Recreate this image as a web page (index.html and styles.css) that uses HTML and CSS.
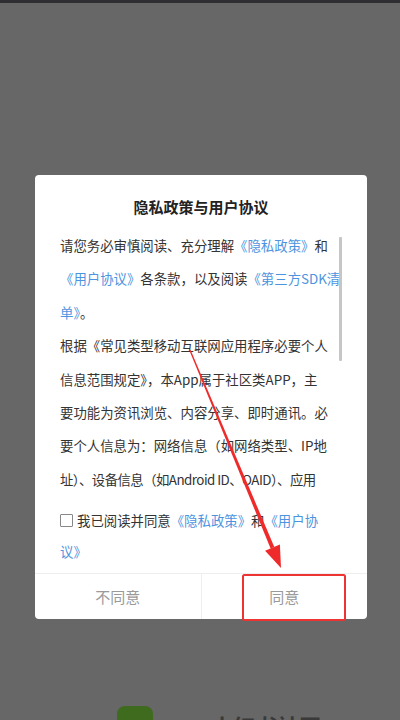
FILE: index.html
```html
<!DOCTYPE html>
<html lang="zh">
<head>
<meta charset="utf-8">
<link rel="stylesheet" href="styles.css">
</head>
<body>
<div class="screen">
  <div class="statusbar"></div>
  <div class="dialog">
    <h1 class="title">隐私政策与用户协议</h1>
    <div class="scroll">
      <div class="content">
        <p>请您务必审慎阅读、充分理解<a class="link">《隐私政策》</a>和<br><a class="link">《用户协议》</a>各条款，以及阅读<a class="link">《第三方SDK清<br>单》</a>。</p>
        <p>根据《常见类型移动互联网应用程序必要个人<br>信息范围规定》，本App属于社区类APP，主<br>要功能为资讯浏览、内容分享、即时通讯。必<br>要个人信息为：网络信息（如网络类型、IP地<br><span class="tight">址）、设备信息（如Android ID、OAID）、应用</span><br>列表信息等。</p>
      </div>
      <div class="scrollbar"></div>
    </div>
    <div class="agree">
      <span class="checkbox"></span>我已阅读并同意<a class="link">《隐私政策》</a>和<a class="link">《用户协议》</a>
    </div>
    <div class="buttons">
      <div class="btn">不同意</div>
      <div class="btn">同意</div>
    </div>
  </div>
  <div class="behind">
    <div class="logo"></div>
    <div class="brand">小红书社区</div>
  </div>
  <svg class="annot" width="400" height="720" viewBox="0 0 400 720">
    <polygon points="190.5,349.8 189.3,350.3 270.6,548.5 274.3,546.9" fill="#ee2a2a"/>
    <polygon points="281,568 279.9,544.6 265.1,550.8" fill="#ee2a2a"/>
    <rect x="243" y="575" width="102" height="45" rx="1.5" fill="none" stroke="#ee3333" stroke-width="2"/>
  </svg>
</div>
</body>
</html>
```
FILE: styles.css
```css
html, body {
  margin: 0;
  padding: 0;
}
body {
  background: #666666;
  font-family: "Noto Sans CJK SC", "Noto Sans", sans-serif;
}
.screen {
  position: relative;
  width: 400px;
  height: 720px;
  overflow: hidden;
  background: #676767;
}
.statusbar {
  height: 3px;
  background: #2e2e33;
}
.dialog {
  margin: 172px 0 0 35px;
  width: 332px;
  background: #ffffff;
  border-radius: 4px;
  overflow: hidden;
}
.title {
  margin: 0;
  padding-top: 20px;
  height: 34px;
  text-align: center;
  font-size: 15px;
  line-height: 24px;
  font-weight: 700;
  color: #222;
}
.scroll {
  position: relative;
  height: 271px;
  overflow: hidden;
  padding-left: 25px;
}
.content {
  font-size: 13.4px;
  line-height: 33.4px;
  color: #333;
  white-space: nowrap;
}
.content p {
  margin: 0;
}
.tight {
  letter-spacing: -0.55px;
}
.link {
  color: #4d94e0;
}
.scrollbar {
  position: absolute;
  left: 304px;
  top: 8px;
  width: 3px;
  height: 124px;
  background: #c6c6c6;
  border-radius: 1px;
}
.agree {
  padding: 5px 40px 6px 25px;
  font-size: 13.4px;
  line-height: 31px;
  color: #333;
}
.checkbox {
  display: inline-block;
  width: 11px;
  height: 11px;
  border: 1px solid #888;
  border-radius: 1px;
  vertical-align: -1px;
  margin-right: 4px;
}
.buttons {
  display: flex;
  border-top: 1px solid #eeeeee;
  height: 45px;
}
.btn {
  flex: 1;
  display: flex;
  align-items: center;
  justify-content: center;
  font-size: 15px;
  color: #9a9a9a;
}
.btn + .btn {
  border-left: 1px solid #eeeeee;
}
.behind {
  display: flex;
  align-items: flex-start;
  margin-top: 87px;
  padding-left: 117px;
}
.logo {
  width: 36px;
  height: 20px;
  background: #3f6b1f;
  border-radius: 8px 8px 0 0;
}
.brand {
  margin-left: 58px;
  margin-top: 3px;
  font-size: 22px;
  font-weight: 700;
  color: #3a3a3a;
}
.annot {
  position: absolute;
  left: 0;
  top: 0;
  pointer-events: none;
}
```
